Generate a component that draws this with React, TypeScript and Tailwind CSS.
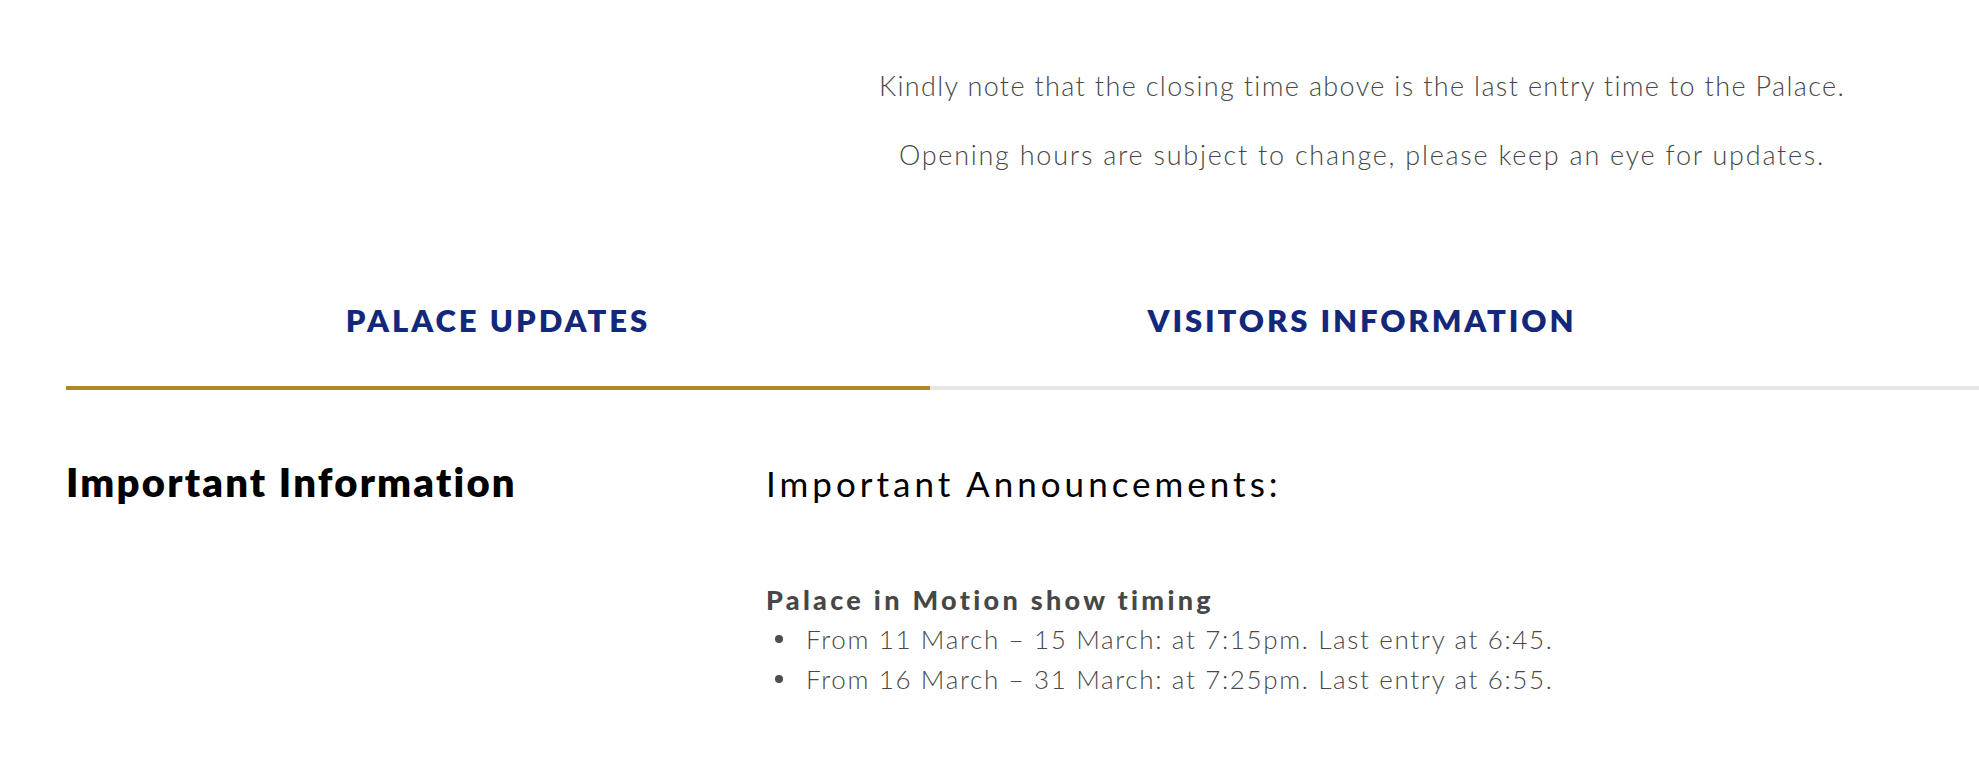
export default function App() {
  const rows = [
    "From 11 March – 15 March: at 7:15pm. Last entry at 6:45.",
    "From 16 March – 31 March: at 7:25pm. Last entry at 6:55.",
  ];

  return (
    <div className="min-h-[773px] w-full overflow-hidden bg-white pl-[66px] font-['Lato',sans-serif]">
      {/* opening hours note */}
      <div className="flex pt-[68px]">
        <div className="w-[864px] shrink-0" />
        <div className="flex w-[864px] shrink-0 flex-col items-center whitespace-nowrap text-[27px] font-light leading-[36px] tracking-[1.35px] text-[#474747]">
          <p>Kindly note that the closing time above is the last entry time to the Palace.</p>
          <p className="mt-[33px] tracking-[1.75px]">Opening hours are subject to change, please keep an eye for updates.</p>
        </div>
      </div>

      {/* tabs */}
      <div className="mt-[127px] flex border-b-4 border-[#e6e6e6]">
        <button className="-mb-1 w-[864px] shrink-0 border-b-4 border-[#ae8827] pb-[46px] text-[31px] font-extrabold uppercase leading-[40px] tracking-[3px] text-[#13287a]">
          Palace Updates
        </button>
        <button className="-mb-1 w-[864px] shrink-0 border-b-4 border-transparent pb-[46px] text-[31px] font-extrabold uppercase leading-[40px] tracking-[2.9px] text-[#13287a]">
          Visitors Information
        </button>
      </div>

      {/* content */}
      <div className="mt-[68px] flex">
        <div className="w-[700px] shrink-0">
          <h2 className="text-[40px] font-extrabold leading-[48px] tracking-[2.2px] text-black">Important Information</h2>
        </div>
        <div className="pt-[1px]">
          <h3 className="text-[35px] leading-[48px] tracking-[4px] text-black">Important Announcements:</h3>
          <h4 className="mt-[77px] text-[27px] font-black leading-[32px] tracking-[3.3px] text-[#474747]">
            Palace in Motion show timing
          </h4>
          <ul className="mt-[3px]">
            {rows.map((r) => (
              <li key={r} className="flex items-center text-[26px] font-light leading-[40px] tracking-[1.65px] text-[#474747]">
                <span className="ml-[9px] mr-[23px] h-[8px] w-[8px] shrink-0 rounded-full bg-[#4d4d4d]" />
                {r}
              </li>
            ))}
          </ul>
        </div>
      </div>
    </div>
  );
}
